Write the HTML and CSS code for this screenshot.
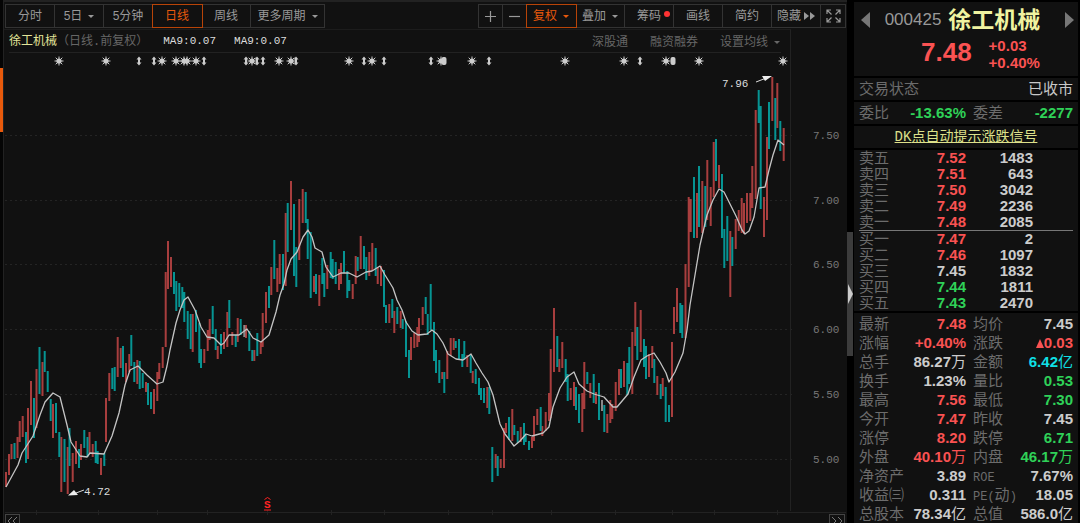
FILE: index.html
```html
<!DOCTYPE html>
<html lang="zh-CN">
<head>
<meta charset="utf-8">
<title>徐工机械 000425</title>
<link rel="stylesheet" href="styles.css">
</head>
<body>
<div class="edge"><div class="edge-mark"></div></div>
<main class="chart-panel">
  <nav class="toolbar">
    <div class="group">
      <button class="w-m">分时</button>
      <button class="w-m menu">5日<i class="caret"></i></button>
      <button class="w-m">5分钟</button>
      <button class="w-m active">日线</button>
      <button class="w-m">周线</button>
      <button class="w-l menu">更多周期<i class="caret"></i></button>
    </div>
    <div class="group">
      <button class="w-s" aria-label="放大"><svg width="13" height="13"><path d="M6.500 1V12M1 6.500H12" stroke="currentColor" stroke-width="1.200"/></svg></button>
      <button class="w-s" aria-label="缩小"><svg width="13" height="13"><path d="M1 6.500H12" stroke="currentColor" stroke-width="1.200"/></svg></button>
      <button class="w-m active menu">复权<i class="caret"></i></button>
      <button class="w-m menu">叠加<i class="caret"></i></button>
      <button class="w-m dotted">筹码</button>
      <button class="w-m">画线</button>
      <button class="w-m">简约</button>
      <button class="w-m tight">隐藏<svg width="11" height="8"><path d="M0 0L5 4L0 8ZM6 0L11 4L6 8Z" fill="currentColor"/></svg></button>
      <button class="w-s" aria-label="全屏"><svg width="15" height="14" fill="none" stroke="currentColor" stroke-width="1.200"><path d="M1 5V1H5M1 1L5.500 5.500M10 1H14V5M14 1L9.500 5.500M1 9V13H5M1 13L5.500 8.500M14 9V13H10M14 13L9.500 8.500"/></svg></button>
    </div>
  </nav>
  <header class="info">
    <div class="info-line">
      <span class="stock">徐工机械</span><span class="mode">（日线<span class="mono">.</span>前复权）</span>
      <span class="ma">MA9:0.07</span><span class="ma">MA9:0.07</span>
      <span class="links"><a href="#">深股通</a><a href="#">融资融券</a><a href="#">设置均线<i class="caret"></i></a></span>
    </div>
  </header>
  <svg class="chart" viewBox="4 53 843 470" role="img" aria-label="日线走势">
    <defs>
      <g id="s"><circle r="2.600" fill="#ccc"/><path d="M-4.500 0H4.500M0-4.500V4.500M-3.300-3.300L3.300 3.300M-3.300 3.300L3.300-3.300" stroke="#ccc" stroke-width="1"/></g>
      <g id="a" fill="#ccc"><path d="M0-4.500L2.500-1.500H1V1.500H2.500L0 4.500L-2.500 1.500H-1V-1.500H-2.500Z"/></g>
      <rect id="b" x="-2.500" y="-4" width="5" height="8" rx="2" fill="#ccc"/>
    </defs>
    <path class="grid" d="M5 135.500H793M5 200.500H793M5 264.500H793M5 329.500H793M5 394.500H793M5 459.500H793"/>
    <path class="axis" d="M790.500 53V511M5 512.500H846M36.500 510V515M98.500 510V515M157.500 510V515M207.500 510V515M267.500 510V515M331.500 510V515M384.500 510V515M448.500 510V515M492.500 510V515M551.500 510V515M615.500 510V515M672.500 510V515M714.500 510V515M777.500 510V515"/>
    <g>
      <use href="#s" x="59" y="61"/><use href="#s" x="106" y="61"/><use href="#a" x="139" y="61"/><use href="#a" x="154" y="61"/><use href="#s" x="162" y="61"/><use href="#s" x="176" y="61"/><use href="#s" x="184" y="61"/><use href="#s" x="187" y="61"/><use href="#s" x="196" y="61"/><use href="#a" x="204" y="61"/><use href="#a" x="246" y="61"/><use href="#s" x="252" y="61"/><use href="#a" x="257" y="61"/><use href="#a" x="263" y="61"/><use href="#s" x="279" y="61"/><use href="#s" x="291" y="61"/><use href="#a" x="296" y="61"/><use href="#s" x="349" y="61"/><use href="#a" x="364" y="61"/><use href="#s" x="372" y="61"/><use href="#a" x="384" y="61"/><use href="#a" x="431" y="61"/><use href="#s" x="441" y="61"/><use href="#b" x="444" y="61"/><use href="#s" x="472" y="61"/><use href="#a" x="489" y="61"/><use href="#s" x="565" y="61"/><use href="#s" x="624" y="61"/><use href="#a" x="640" y="61"/><use href="#s" x="666" y="61"/><use href="#b" x="673" y="61"/><use href="#s" x="699" y="61"/><use href="#s" x="783" y="61"/>
    </g>
    <path class="up" d="M6 472V487M9 454V475M11.500 444V459M17.500 437V458M19.700 421V442M22.700 416V437M28 408V459M31 381V425M36.500 369V428M42.500 362V396M53 404V438M61.300 437V492M67.700 447V494M72.700 453V482M76 441V464M81 444V460M89.500 432V453M92.700 444V457M101 458V475M106 398V442M109.300 373V401M117.700 337V377M120.700 348V368M126 363V382M129.300 354V372M137.300 360V384M146 382V392M154 389V414M157.300 372V401M159.300 363V379M162.700 347V368M165.700 272V347M168 241V289M171 257V287M192.700 314V352M204.300 349V363M207.700 330V351M209.700 319V340M217.700 346V359M224 332V349M227.300 312V347M232.300 332V345M237.700 318V342M246 325V338M254.300 350V361M260.700 342V354M262.700 313V347M266 292V323M271.300 267V295M277.300 268V292M279.700 254V284M285.700 213V286M291 181V230M299.300 199V260M302.700 189V223M314 276V292M319.300 275V306M327.300 265V289M339 269V290M341 263V284M352.700 284V299M355.700 256V284M360.700 236V269M369.300 252V276M372.300 243V271M377.700 267V284M381 266V286M389.300 304V323M394.300 311V333M400.700 311V328M411 337V360M414.300 333V348M417.300 327V347M419 318V342M422.700 307V325M442.300 372V379M447.300 351V379M450.700 338V356M453.700 338V350M467.300 355V367M472.700 371V383M487.300 387V408M495.700 454V468M500.700 459V468M504 428V468M506 423V433M512.300 409V441M520.700 427V442M532 437V448M534 416V441M537.300 409V425M542.300 426V436M545.700 412V431M549 393V421M550.700 349V418M554 308V372M559.300 359V372M562.300 342V368M570.700 388V400M574 382V406M582.300 393V432M584.300 362V409M590.300 383V398M596 392V404M607.300 414V433M610.300 400V423M612.300 404V419M615.700 382V411M619 369V395M624 361V387M632.300 332V394M635.300 302V346M640.700 310V352M649 354V377M652.300 346V368M657.300 376V395M662.700 378V396M672 342V417M674 307V334M677 288V322M685.500 264V338M688.700 197V287M690.700 199V232M697 193V238M702.300 181V233M707.300 160V220M710.700 187V226M713.700 142V197M719 165V188M730.300 231V297M735.700 219V249M738.700 210V231M741.700 198V233M744 203V234M747 193V223M750.300 193V221M752.300 166V208M755.700 110V199M764 197V237M767 137V220M772.300 77V121M777.300 83V128M783.700 128V161"/>
    <path class="down" d="M14.500 443V459M26 432V463M34 398V438M39.500 347V394M44.700 351V372M47.700 371V392M50.700 399V421M56 403V433M59.300 432V457M64.500 439V482M69.500 428V466M79 449V468M84.300 430V448M87.500 437V457M95.700 441V463M97.700 451V464M104.300 453V466M112.300 368V389M114.700 367V391M123 346V377M131.300 335V366M134.300 362V382M139.700 361V389M142.700 373V388M148 383V405M151 392V409M174 272V294M176.300 281V311M179.300 283V307M182.300 287V308M184.300 292V322M187.700 311V339M190.700 314V349M196 310V332M199.300 323V363M201 349V368M212.700 306V334M215.700 329V350M221 334V354M229.300 300V328M235.700 335V347M240.700 319V335M249.300 331V351M252.300 350V361M257.300 333V356M269 286V308M274.300 240V279M283 254V290M287.700 203V252M294 204V276M296.300 247V287M305.700 192V223M307.700 219V259M310.700 232V298M316 274V294M322.300 258V284M324.300 273V297M330.700 252V278M332.700 259V279M335.700 262V284M344 251V273M347.300 271V298M349.300 280V291M357.700 257V271M364 246V269M366.300 257V280M375.700 248V276M384 270V307M386 305V323M392.300 299V318M397.300 307V324M402.700 319V329M406 321V357M409 350V378M425.700 297V314M427.700 314V335M430.700 284V330M434 322V361M436 350V373M439.300 360V383M444.300 372V393M455.700 341V348M459 339V360M462.300 354V367M464.300 341V360M470.700 355V373M475.700 369V384M479 378V395M481 388V400M484 388V403M489.300 387V414M492.300 447V482M497.700 456V476M509 417V440M514.300 425V435M517.700 431V443M524 423V445M525.700 434V442M529 441V450M540.700 407V431M557.300 336V367M565.700 359V382M567.700 374V401M576 387V410M579 394V423M587.300 372V384M593.700 374V403M599 383V420M604.300 405V432M621 369V388M627.300 363V395M629.300 347V384M637.300 327V360M644 339V367M646 346V379M654.300 359V383M660.700 384V399M665.700 387V422M669 405V422M680.300 303V333M682.300 305V338M694 177V238M699 166V227M705.300 186V227M716 139V181M722 174V238M724.300 229V268M727.300 216V261M732.300 237V266M758.700 90V123M760.700 106V209M769 102V149M775.300 98V140M780.300 121V151"/>
    <path class="flat" d="M244.300 325V337M602 400V411"/>
    <polyline class="average" points="6,487 18,465 22,453 33,436 40,415 45,402 53,393 60,397 67,425 71,442 80,456 87,457 90,453 104,454 112,436 119,413 125,385 130,370 138,366 147,375 157,384 163,382 167,366 170,350 176,323 180,310 184,300 188,297 195,310 201,327 207,337 214,338 221,345 224,343 229,335 239,335 247,329 253,338 261,342 269,335 276,312 280,295 284,284 287,270 291,259 297,252 303,237 308,230 312,237 315,248 322,252 326,267 333,277 341,273 349,273 357,277 366,272 372,271 380,266 385,275 393,288 397,300 402,310 406,322 412,331 418,335 427,334 432,330 437,334 443,343 448,354 456,359 463,360 471,354 476,363 482,373 488,382 493,395 500,424 505,434 514,446 520,441 526,434 532,436 543,433 549,427 553,407 560,388 567,377 574,372 579,384 587,391 594,394 604,397 613,407 617,407 628,394 634,377 641,360 647,356 654,353 660,362 666,373 669,382 675,372 683,353 687,330 690,305 695,275 700,245 707,215 713,200 719,189 724,192 731,206 736,216 742,230 745,234 749,231 754,217 759,188 765,187 769,170 773,155 778,140 784,145"/>
    <path class="pointer" d="M756 82L765 78.500M76 493L84 490"/>
    <path fill="#eee" d="M772 76L762 76L765 81ZM68 495.500L78 495L74 490Z"/>
    <g class="peak"><text x="722" y="87">7.96</text><text x="84" y="495">4.72</text></g>
    <g class="scale"><text x="813" y="139">7.50</text><text x="813" y="204">7.00</text><text x="813" y="268">6.50</text><text x="813" y="333">6.00</text><text x="813" y="398">5.50</text><text x="813" y="463">5.00</text></g>
    <g class="event"><text x="264" y="508">S</text><path d="M264.500 499.500L267.500 497.500L270.500 499.500M264 510H271"/></g>
    <g class="pager"><rect x="5.500" y="514.500" width="14" height="12"/><path d="M12 517L8 521L12 525M17 517L13 521L17 525"/><rect x="829.500" y="514.500" width="15" height="12"/><path d="M832 517L836 521L832 525M838 517L842 521L838 525"/></g>
  </svg>
</main>
<div class="splitter"><div class="thumb"><svg width="6" height="20"><path d="M1 0L6 10L1 20Z" fill="#ccc"/></svg></div></div>
<aside class="quote">
  <section class="head">
    <button class="arrow" aria-label="上一只"><svg width="9" height="16"><path d="M9 0V16L0 8Z" fill="currentColor"/></svg></button>
    <h1><span class="code">000425</span>徐工机械</h1>
    <button class="arrow" aria-label="下一只"><svg width="9" height="16"><path d="M0 0V16L9 8Z" fill="currentColor"/></svg></button>
    <div class="price"><strong>7.48</strong><p>+0.03<br>+0.40%</p></div>
  </section>
  <section class="row"><span>交易状态</span><span class="white">已收市</span></section>
  <section class="row pair"><span>委比</span><b class="green">-13.63%</b><span>委差</span><b class="green">-2277</b></section>
  <section class="row tip"><a href="#"><span class="mono">DK</span>点自动提示涨跌信号</a></section>
  <section class="book">
    <table>
      <tbody>
        <tr><th>卖五</th><td class="red">7.52</td><td>1483</td></tr>
        <tr><th>卖四</th><td class="red">7.51</td><td>643</td></tr>
        <tr><th>卖三</th><td class="red">7.50</td><td>3042</td></tr>
        <tr><th>卖二</th><td class="red">7.49</td><td>2236</td></tr>
        <tr><th>卖一</th><td class="red">7.48</td><td>2085</td></tr>
      </tbody>
    </table>
    <hr>
    <table>
      <tbody>
        <tr><th>买一</th><td class="red">7.47</td><td>2</td></tr>
        <tr><th>买二</th><td class="red">7.46</td><td>1097</td></tr>
        <tr><th>买三</th><td>7.45</td><td>1832</td></tr>
        <tr><th>买四</th><td class="green">7.44</td><td>1811</td></tr>
        <tr><th>买五</th><td class="green">7.43</td><td>2470</td></tr>
      </tbody>
    </table>
  </section>
  <section class="stats">
    <table>
      <tbody>
        <tr><th>最新</th><td class="red">7.48</td><th>均价</th><td>7.45</td></tr>
        <tr><th>涨幅</th><td class="red">+0.40%</td><th>涨跌</th><td class="red"><svg width="8" height="9"><path d="M4 0L8 9H0Z" fill="currentColor"/></svg>0.03</td></tr>
        <tr><th>总手</th><td>86.27<span>万</span></td><th>金额</th><td class="cyan">6.42<span>亿</span></td></tr>
        <tr><th>换手</th><td>1.23%</td><th>量比</th><td class="green">0.53</td></tr>
        <tr><th>最高</th><td class="red">7.56</td><th>最低</th><td class="green">7.30</td></tr>
        <tr><th>今开</th><td class="red">7.47</td><th>昨收</th><td>7.45</td></tr>
        <tr><th>涨停</th><td class="red">8.20</td><th>跌停</th><td class="green">6.71</td></tr>
        <tr><th>外盘</th><td class="red">40.10<span>万</span></td><th>内盘</th><td class="green">46.17<span>万</span></td></tr>
        <tr><th>净资产</th><td>3.89</td><th><span class="mono">ROE</span></th><td>7.67%</td></tr>
        <tr><th>收益㈢</th><td>0.311</td><th><span class="mono">PE(</span>动<span class="mono">)</span></th><td>18.05</td></tr>
        <tr><th>总股本</th><td>78.34<span>亿</span></td><th>总值</th><td>586.0<span>亿</span></td></tr>
      </tbody>
    </table>
  </section>
</aside>
</body>
</html>
```
FILE: styles.css
```css
* { box-sizing: border-box; }
html, body { height: 100%; margin: 0; overflow: hidden; }
body {
  display: flex;
  background: #000;
  color: #999;
  font: 12px/20px "Liberation Sans", "Noto Sans CJK SC", sans-serif;
}
button {
  padding: 0;
  border: 0;
  background: none;
  color: inherit;
  font: inherit;
}
a { color: inherit; text-decoration: none; }
.mono { font-family: "Liberation Mono", monospace; font-size: 12px; line-height: 1; }
.edge {
  flex: none;
  width: 4px;
  padding-top: 68px;
  background: #050505;
  border-right: 1px solid #222;
}
.edge-mark { width: 3px; height: 64px; background: #e85a0c; }

/* chart side */
.chart-panel {
  flex: 1;
  min-width: 0;
  background: #111;
  border-top: 2px solid #222;
}
.toolbar {
  display: flex;
  justify-content: space-between;
  height: 27px;
  padding: 2px 1px 0;
}
.group { display: flex; height: 24px; border: 1px solid #333; }
.group button {
  position: relative;
  display: flex;
  align-items: center;
  justify-content: center;
  gap: 3px;
  border-right: 1px solid #333;
}
.group button:last-child { border-right: 0; }
.group .w-s { width: 24px; }
.group .w-m { width: 49px; }
.group .w-l { width: 73px; }
.group .menu { gap: 6px; }
.group .active { color: #e8590c; outline: 1px solid #b84408; border-color: transparent; }
.caret {
  display: inline-block;
  border: 3px solid transparent;
  border-top-color: currentColor;
  border-bottom: 0;
}
.dotted::after {
  content: "";
  position: absolute;
  top: 6px;
  right: 3px;
  width: 6px;
  height: 6px;
  border-radius: 50%;
  background: #f33;
}
.info {
  height: 24px;
  margin-right: 56px;
  padding: 2px 9px 0 5px;
  border-top: 1px solid #1c1c1c;
  border-right: 1px solid #222;
}
.info-line {
  display: flex;
  height: 21px;
  border-bottom: 1px solid #222;
  line-height: 18px;
}
.stock { color: #e3e69a; }
.mode { margin-right: 15px; color: #666; }
.ma {
  margin-right: 18px;
  color: #ddd;
  font-family: "Liberation Mono", monospace;
  font-size: 11px;
}
.links { display: flex; gap: 22px; margin-left: auto; padding-right: 1px; color: #666; }
.links a { display: flex; align-items: center; gap: 6px; }
.chart { display: block; width: 100%; height: auto; font-family: "Liberation Mono", monospace; font-size: 11px; }
.grid { stroke: #242424; stroke-dasharray: 2 3; }
.axis { stroke: #222; fill: none; }
.up { stroke: #a83e3e; stroke-width: 2; }
.down { stroke: #069493; stroke-width: 2; }
.flat { stroke: #888; stroke-width: 2; }
.average { fill: none; stroke: #c4c4c4; stroke-width: 1.3; stroke-linejoin: round; }
.pointer { stroke: #ddd; }
.peak { fill: #ddd; }
.scale { fill: #777; }
.event { fill: #f22; font-weight: bold; }
.event path { fill: none; stroke: #f22; }
.pager { fill: none; stroke: #777; }
.pager rect { stroke: #444; }

.splitter { flex: none; width: 6px; padding-top: 232px; }
.thumb { display: flex; align-items: center; height: 124px; background: #3c3c3c; }

/* quote side */
.quote {
  display: flex;
  flex: none;
  flex-direction: column;
  gap: 2px;
  width: 227px;
  padding: 2px 2px 0 1px;
  font-size: 15px;
  color: #6c6c6c;
}
.quote section { background: #111; }
.head {
  display: grid;
  flex: none;
  grid-template-columns: 10px 1fr 10px;
  grid-template-rows: 34px 34px;
  height: 74px;
  padding: 1px 3px 0 7px;
}
.arrow { color: #777; display: flex; align-items: center; }
h1 {
  display: flex;
  align-items: center;
  justify-content: center;
  gap: 7px;
  margin: 0;
  padding-right: 11px;
  color: #f0f3a0;
  font-size: 23px;
  line-height: 34px;
}
.code { color: #999; font-size: 17px; font-weight: normal; }
.price {
  display: flex;
  grid-column: 1 / 4;
  align-items: center;
  gap: 17px;
  padding-left: 60px;
  color: #fa5252;
}
.price strong { font-size: 26px; line-height: 30px; padding-bottom: 4px; }
.price p { margin: 0; font-weight: bold; line-height: 17px; }
.row {
  display: flex;
  flex: none;
  justify-content: space-between;
  height: 22px;
  padding: 0 5px;
  line-height: 22px;
}
.pair { display: grid; grid-template-columns: 44px 63px 50px 1fr; }
.pair b { text-align: right; }
.pair b + span { padding-left: 7px; }
.tip { justify-content: center; height: 22px; color: #dde08a; font-size: 14px; line-height: 21px; }
.tip a { text-decoration: underline; }
.tip .mono { font-size: 14px; }
.white { color: #c8c8c8; }
.red { color: #fa5252; }
.green { color: #2fd158; }
.cyan { color: #0fe0e6; }
table { width: 100%; border-collapse: collapse; table-layout: fixed; }
th { padding: 0; font-weight: normal; text-align: left; white-space: nowrap; }
td { padding: 0; font-weight: bold; text-align: right; white-space: nowrap; }
td:not([class]) { color: #ccc; }
td span { font-weight: normal; }
.book { flex: none; padding: 0 45px 0 5px; }
.book tr { height: 16px; line-height: 16px; }
.book th { width: 44px; }
.book td:nth-child(2) { width: 63px; }
.book hr { height: 1px; margin: 0 -40px 0 0; border: 0; background: #777; }
.stats { flex: 1; min-height: 0; padding: 1px 5px 0; }
.stats tr { height: 19px; line-height: 18px; }
.stats th:nth-child(1) { width: 44px; }
.stats td:nth-child(2) { width: 63px; }
.stats th:nth-child(3) { width: 50px; padding-left: 7px; }
```
